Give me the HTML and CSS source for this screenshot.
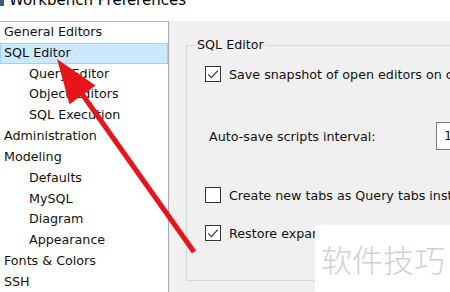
FILE: index.html
```html
<!DOCTYPE html>
<html lang="en">
<head>
    <meta charset="UTF-8">
    <title>Workbench Preferences</title>
    <link rel="stylesheet" href="styles.css">
</head>
<body>

    <div class="window">
        <!-- Title bar (cut at the top) -->
        <div class="titlebar">
            <span class="app-icon"></span>
            <span class="title">Workbench Preferences</span>
        </div>

        <div class="main">
            <!-- Category tree -->
            <ul class="tree">
                <li class="node">General Editors</li>
                <li class="node selected">SQL Editor</li>
                <li class="node child">Query Editor</li>
                <li class="node child">Object Editors</li>
                <li class="node child">SQL Execution</li>
                <li class="node">Administration</li>
                <li class="node">Modeling</li>
                <li class="node child">Defaults</li>
                <li class="node child">MySQL</li>
                <li class="node child">Diagram</li>
                <li class="node child">Appearance</li>
                <li class="node">Fonts &amp; Colors</li>
                <li class="node">SSH</li>
            </ul>

            <!-- Settings page -->
            <div class="page">
                <div class="group">
                    <span class="legend">SQL Editor</span>

                    <div class="row">
                        <span class="checkbox"><svg viewBox="0 0 14 14"><polyline points="2.2,7.4 5.4,10.6 11.8,3.6"/></svg></span>
                        Save snapshot of open editors on close
                    </div>

                    <div class="row interval-row">
                        <span class="label">Auto-save scripts interval:</span>
                        <span class="spin">10</span>
                    </div>

                    <div class="row gap-large">
                        <span class="checkbox"></span>
                        Create new tabs as Query tabs instead of File
                    </div>

                    <div class="row gap-small">
                        <span class="checkbox"><svg viewBox="0 0 14 14"><polyline points="2.2,7.4 5.4,10.6 11.8,3.6"/></svg></span>
                        Restore expanded state of the schema tree
                    </div>
                </div>
            </div>
        </div>

        <!-- Watermark over the corner -->
        <div class="watermark">软件技巧</div>

        <!-- Red pointer arrow -->
        <svg class="arrow" viewBox="0 0 450 292">
            <line x1="82" y1="94" x2="194" y2="252"/>
            <polygon points="57,59 95.5,85.6 69.5,104.2"/>
        </svg>
    </div>

</body>
</html>
```

FILE: styles.css
```css
html, body {
    margin: 0;
    padding: 0;
    overflow: hidden;
}
body {
    font-family: "DejaVu Sans", sans-serif;
    font-size: 12.7px;
    color: #111;
    background-color: #f0f0f0;
}
.window {
    position: relative;
    width: 450px;
    height: 292px;
    overflow: hidden;
}
.titlebar {
    display: flex;
    height: 21px;
    background: #fff;
    overflow: hidden;
}
.app-icon {
    width: 4px;
    height: 6px;
    background: #3d5d7c;
}
.title {
    margin-left: 5px;
    margin-top: -7px;
    font-size: 15px;
    line-height: 15px;
    height: 15px;
    white-space: nowrap;
    color: #000;
}
.main {
    display: flex;
    height: 271px;
}
.tree {
    list-style: none;
    margin: 0;
    padding: 0;
    width: 168px;
    flex: none;
    background: #fff;
    border-top: 1px solid #b4b4b4;
    border-right: 1px solid #a9a9a9;
}
.node {
    height: 20.83px;
    line-height: 20.83px;
    padding-left: 4px;
    white-space: nowrap;
    box-sizing: border-box;
}
.node.child {
    padding-left: 29px;
}
.node.selected {
    background: #cce8ff;
    border: 1px solid #99d1ff;
    padding-left: 3px;
    line-height: 18.83px;
}
.page {
    flex: 1;
    padding: 24px 0 0 17px;
}
.group {
    position: relative;
    box-sizing: border-box;
    width: 330px;
    height: 236px;
    border: 1px solid #d7d7d7;
    padding: 18px 0 0 18px;
}
.legend {
    position: absolute;
    left: 8px;
    top: -9px;
    padding: 0 2px;
    line-height: 16px;
    background: #f0f0f0;
}
.row {
    display: flex;
    align-items: center;
    height: 20px;
    white-space: nowrap;
}
.checkbox {
    display: flex;
    width: 16px;
    height: 16px;
    box-sizing: border-box;
    border: 1px solid #333;
    background: #fff;
    margin-right: 8px;
    flex: none;
}
.checkbox svg {
    width: 14px;
    height: 14px;
}
.checkbox polyline {
    fill: none;
    stroke: #333;
    stroke-width: 1.2;
}
.interval-row {
    height: 28px;
    margin-top: 38px;
    padding-left: 4px;
}
.label {
    width: 227px;
    flex: none;
}
.spin {
    width: 40px;
    height: 28px;
    box-sizing: border-box;
    border: 1px solid #7a7a7a;
    background: #fff;
    padding-left: 7px;
    line-height: 26px;
    flex: none;
}
.gap-large {
    margin-top: 35px;
}
.gap-small {
    margin-top: 18px;
}
.watermark {
    position: absolute;
    left: 315px;
    top: 225px;
    width: 135px;
    height: 67px;
    padding-left: 6px;
    box-sizing: border-box;
    background: #fff;
    font-family: "Noto Sans CJK SC", sans-serif;
    font-size: 31px;
    font-weight: 300;
    line-height: 68px;
    color: #d0d0d0;
    white-space: nowrap;
}
.arrow {
    position: absolute;
    left: 0;
    top: 0;
    width: 450px;
    height: 292px;
}
.arrow line {
    stroke: #e8141b;
    stroke-width: 5;
}
.arrow polygon {
    fill: #e8141b;
}
```
